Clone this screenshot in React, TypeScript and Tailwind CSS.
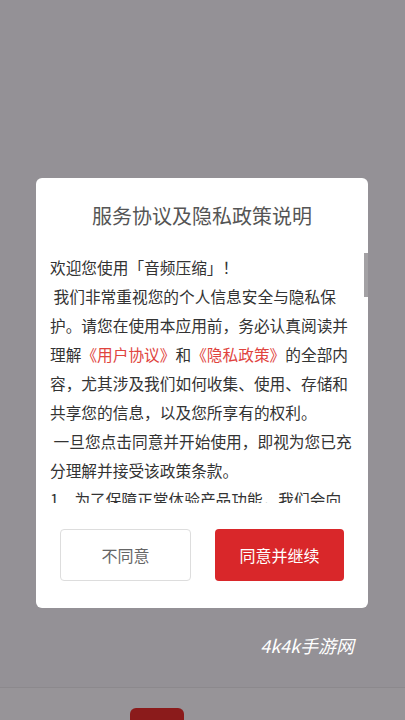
import React from 'react'

const Link = ({ children }: { children: React.ReactNode }) => (
  <span className="text-[#e0443e]">{children}</span>
)

const App = () => {
  return (
    <div
      className="w-[405px] h-[720px] overflow-hidden bg-[#949196] flex flex-col"
      style={{ fontFamily: '"Noto Sans CJK SC", "Noto Sans", sans-serif' }}
    >
      <div className="relative mt-[178px] mx-[36px] w-[332px] h-[432px] bg-white rounded-[6px] flex flex-col">
        <p className="pt-[24px] text-[20px] leading-[28px] text-center text-[#555555]">服务协议及隐私政策说明</p>
        <div className="mt-[23px] ml-[14px] w-[306px] h-[250px] overflow-hidden">
          <p className="whitespace-pre-wrap text-[15.7px] leading-[29px] text-[#333333]">
            {'欢迎您使用「音频压缩」！\n 我们非常重视您的个人信息安全与隐私保护。请您在使用本应用前，务必认真阅读并理解'}
            <Link>《用户协议》</Link>
            和
            <Link>《隐私政策》</Link>
            {'的全部内容，尤其涉及我们如何收集、使用、存储和共享您的信息，以及您所享有的权利。\n 一旦您点击同意并开始使用，即视为您已充分理解并接受该政策条款。\n1、为了保障正常体验产品功能，我们会向您收集必要的信息。'}
          </p>
        </div>
        {/* scrollbar */}
        <div className="absolute right-0 top-[75px] w-[4px] h-[44px] bg-[#a3a1a4]" />
        <div className="mt-[26px] px-6 flex gap-6">
          <button className="flex-1 h-[52px] rounded-[4px] border border-[#dddddd] bg-white text-[16px] text-[#666666]">不同意</button>
          <button className="flex-1 h-[52px] rounded-[4px] bg-[#d9272a] text-[16px] text-white">同意并继续</button>
        </div>
      </div>
      <p className="mt-[25px] pr-[51px] text-right text-[18px] leading-[24px] italic text-white">4k4k手游网</p>
      <div className="mt-[30px] flex-1 border-t border-[#8c898d] bg-[#979498] pt-[20px] pl-[130px]">
        <div className="w-[54px] h-[12px] rounded-t-[6px] bg-[#8b1b1b]" />
      </div>
    </div>
  )
}

export default App
